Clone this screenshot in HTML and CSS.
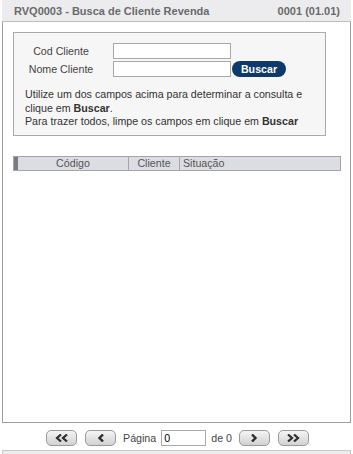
FILE: index.html
```html
<!DOCTYPE html>
<html lang="pt">
<head>
<meta charset="utf-8">
<link rel="stylesheet" href="styles.css">
</head>
<body>
<div class="page">
  <div class="titlebar">
    <span class="title">RVQ0003 - Busca de Cliente Revenda</span>
    <span class="version">0001 (01.01)</span>
  </div>
  <div class="frame">
    <div class="formbox">
      <div class="fields">
        <div class="row">
          <span class="label">Cod Cliente</span>
          <input class="field" type="text">
        </div>
        <div class="row">
          <span class="label">Nome Cliente</span>
          <input class="field" type="text">
          <button class="buscar">Buscar</button>
        </div>
      </div>
      <div class="help">
        <div>Utilize um dos campos acima para determinar a consulta e</div>
        <div>clique em <b>Buscar</b>.</div>
        <div>Para trazer todos, limpe os campos em clique em <b>Buscar</b></div>
      </div>
    </div>
    <div class="grid">
      <div class="marker"></div>
      <div class="col c1">Código</div>
      <div class="col c2">Cliente</div>
      <div class="col c3">Situação</div>
    </div>
  </div>
  <div class="pager">
    <button class="pbtn"><svg width="14" height="8" viewBox="0 0 14 8"><path d="M6 0.5 L2 4 L6 7.5 M12 0.5 L8 4 L12 7.5" fill="none" stroke="#2e2e2e" stroke-width="2.2"/></svg></button>
    <button class="pbtn"><svg width="8" height="8" viewBox="0 0 8 8"><path d="M6 0.5 L2.5 4 L6 7.5" fill="none" stroke="#2e2e2e" stroke-width="2.4"/></svg></button>
    <span class="ptext">Página</span>
    <input class="pinput" type="text" value="0">
    <span class="ptext">de 0</span>
    <button class="pbtn"><svg width="8" height="8" viewBox="0 0 8 8"><path d="M2 0.5 L5.5 4 L2 7.5" fill="none" stroke="#2e2e2e" stroke-width="2.4"/></svg></button>
    <button class="pbtn"><svg width="14" height="8" viewBox="0 0 14 8"><path d="M2 0.5 L6 4 L2 7.5 M8 0.5 L12 4 L8 7.5" fill="none" stroke="#2e2e2e" stroke-width="2.2"/></svg></button>
  </div>
  <div class="footer"></div>
</div>
</body>
</html>
```
FILE: styles.css
```css
* { box-sizing: border-box; }
html, body { margin: 0; padding: 0; background: #fff; }
body { font-family: "Liberation Sans", Arial, sans-serif; font-size: 10.67px; color: #333; }
.page { width: 353px; height: 454px; padding: 0 2px; display: flex; flex-direction: column; overflow: hidden; }
.titlebar {
  height: 22px; flex: none;
  background: #ececee;
  border-bottom: 1px solid #bdbdbd;
  display: flex; justify-content: space-between; align-items: center;
  padding: 0 11px 0 12px;
  font-weight: bold; color: #6a6a6a; font-size: 11px;
}
.frame {
  height: 401px; flex: none;
  border: 1px solid #9e9e9e; border-top: none;
  padding: 10px 10px 0 10px;
}
.formbox {
  width: 313px;
  border: 1px solid #a9a9a9;
  background: #f6f6f6;
  padding: 10px 10px 7px 11px;
}
.fields { display: flex; flex-direction: column; gap: 2px; }
.row { display: flex; align-items: center; height: 16px; }
.label { width: 72px; margin-right: 16px; text-align: center; color: #444; }
.field {
  width: 118px; height: 16px; margin: 0;
  border: 1px solid #a8a8a8; background: #fff; padding: 0 2px;
  font: inherit;
}
.buscar {
  margin-left: 1px; height: 16px; width: 54px; padding: 0;
  border: none; border-radius: 8px;
  background: #0d3a6b; color: #fff;
  font: bold 10.67px "Liberation Sans", Arial, sans-serif;
}
.help { margin-top: 10px; display: flex; flex-direction: column; }
.help div { height: 13.5px; line-height: 14px; white-space: nowrap; }
.help b { font-weight: bold; color: #333; }
.grid {
  margin-top: 20px; width: 328px; height: 15px;
  display: flex; align-items: stretch;
  background: #dcdce3;
  border: 1px solid #a4a4ac;
  color: #555;
}
.marker { width: 4px; background: #7a7a80; flex: none; }
.col { display: flex; align-items: center; padding: 0 3px; border-right: 1px solid #a4a4ac; }
.c1 { width: 111px; justify-content: center; }
.c2 { width: 51px; justify-content: center; }
.c3 { flex: 1; border-right: none; }
.pager {
  height: 26px; flex: none;
  display: flex; align-items: center; justify-content: center;
  padding-top: 3px; padding-left: 2px;
  color: #444;
}
.pbtn {
  width: 31px; height: 16px; padding: 0; margin: 0 4px;
  border: 1px solid #9a9a9a; border-radius: 5px;
  background: linear-gradient(#f4f4f4, #d2d2d2);
  display: flex; align-items: center; justify-content: center;
}
.ptext { margin: 0 3px; }
.pinput {
  width: 45px; height: 16px; margin: 0 2px; padding: 0 2px;
  border: 1px solid #a8a8a8; font: 10.67px "Liberation Sans", Arial, sans-serif; color: #000;
}
.footer { flex: 1; background: #ececec; border: 1px solid #c8c8c8; border-bottom: none; margin-top: 1px; }
```
